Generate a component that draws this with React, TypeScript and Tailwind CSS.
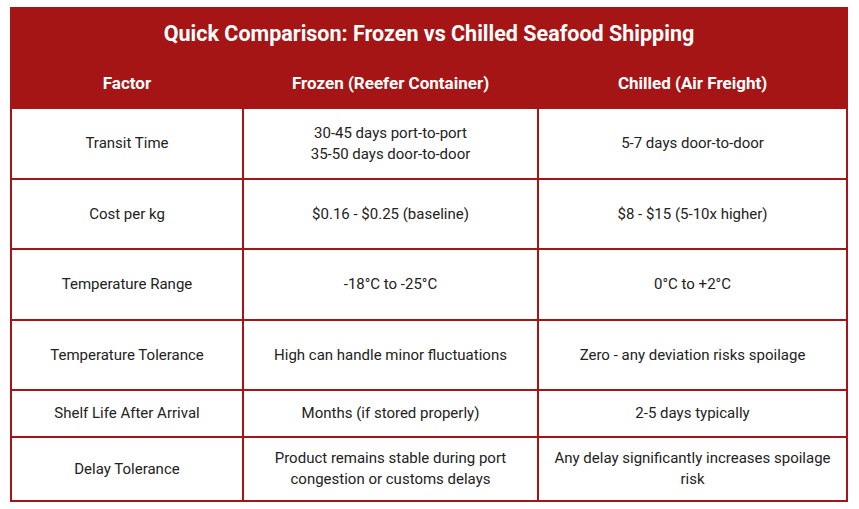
const rows: { factor: string; frozen: string[]; chilled: string[]; h: string }[] = [
  { factor: 'Transit Time', frozen: ['30-45 days port-to-port', '35-50 days door-to-door'], chilled: ['5-7 days door-to-door'], h: 'h-[71px]' },
  { factor: 'Cost per kg', frozen: ['$0.16 - $0.25 (baseline)'], chilled: ['$8 - $15 (5-10x higher)'], h: 'h-[70px]' },
  { factor: 'Temperature Range', frozen: ['-18°C to -25°C'], chilled: ['0°C to +2°C'], h: 'h-[71px]' },
  { factor: 'Temperature Tolerance', frozen: ['High can handle minor fluctuations'], chilled: ['Zero - any deviation risks spoilage'], h: 'h-[70px]' },
  { factor: 'Shelf Life After Arrival', frozen: ['Months (if stored properly)'], chilled: ['2-5 days typically'], h: 'h-[47px]' },
  {
    factor: 'Delay Tolerance',
    frozen: ['Product remains stable during port congestion or customs delays'],
    chilled: ['Any delay significantly increases spoilage risk'],
    h: 'h-[64px]',
  },
];

export default function App() {
  return (
    <div className="w-[859px] h-[509px] bg-white pt-[7px] pl-[10px]" style={{ fontFamily: 'Roboto, "Liberation Sans", sans-serif' }}>
      <table className="w-[836px] border-collapse table-fixed text-[15px] leading-[21px] text-[#222222]">
        <colgroup>
          <col className="w-[232px]" />
          <col className="w-[295px]" />
          <col className="w-[309px]" />
        </colgroup>
        <thead>
          <tr className="h-[51px] bg-[#a51515]">
            <th colSpan={3} className="border-2 border-[#a51515] border-b border-b-[#d06a6a] text-white text-[21.5px] font-bold text-center">
              Quick Comparison: Frozen vs Chilled Seafood Shipping
            </th>
          </tr>
          <tr className="h-[49px] bg-[#a51515]">
            <th className="border-2 border-[#a51515] text-white text-[17px] font-bold">Factor</th>
            <th className="border-2 border-[#a51515] text-white text-[17px] font-bold">Frozen (Reefer Container)</th>
            <th className="border-2 border-[#a51515] text-white text-[17px] font-bold">Chilled (Air Freight)</th>
          </tr>
        </thead>
        <tbody>
          {rows.map((r) => (
            <tr key={r.factor} className={r.h}>
              <td className="border-2 border-[#a51515] px-3 text-center">{r.factor}</td>
              <td className="border-2 border-[#a51515] px-3 text-center">
                {r.frozen.map((l) => (
                  <div key={l}>{l}</div>
                ))}
              </td>
              <td className="border-2 border-[#a51515] px-3 text-center">
                {r.chilled.map((l) => (
                  <div key={l}>{l}</div>
                ))}
              </td>
            </tr>
          ))}
        </tbody>
      </table>
    </div>
  );
}
